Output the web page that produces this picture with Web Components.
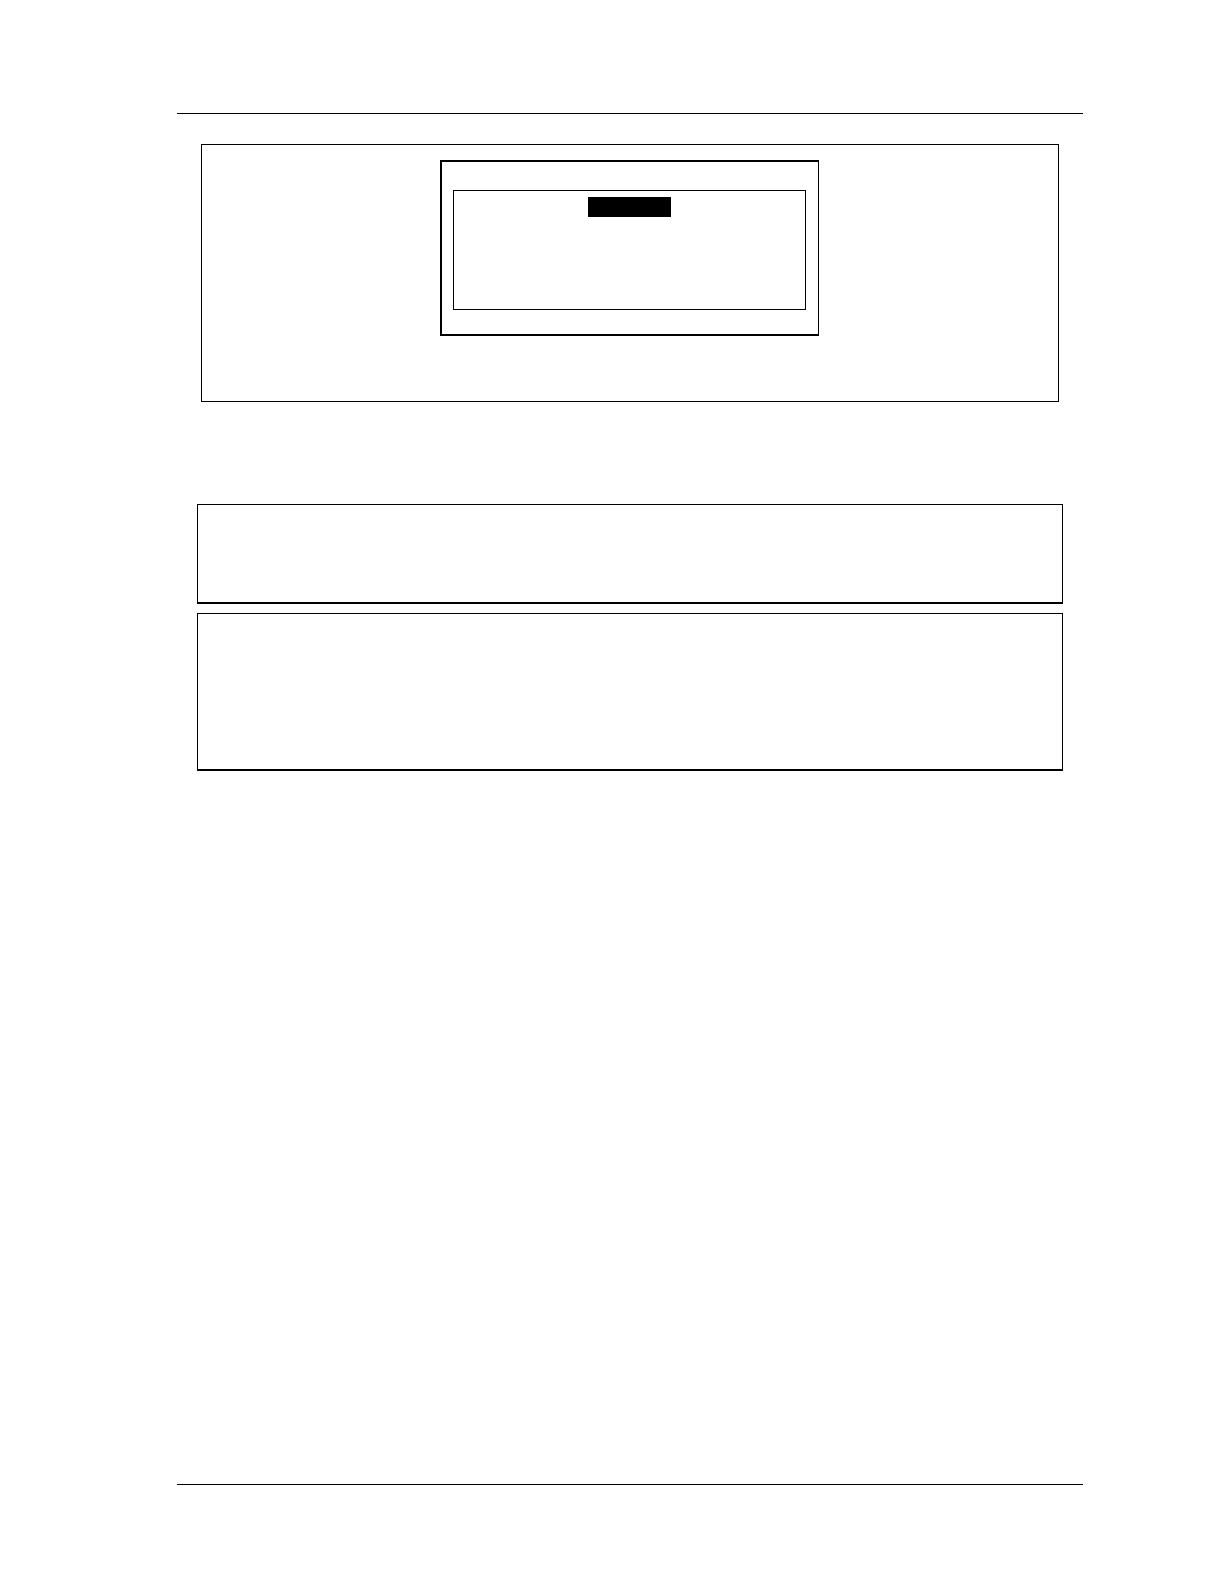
<!DOCTYPE html>
<html lang="en">
<head>
  <meta charset="UTF-8">
  <meta name="viewport" content="width=device-width, initial-scale=1.0">
  <style>
    body {
      margin: 0;
      background-color: #ffffff;
      font-family: "Liberation Sans", sans-serif;
    }
  </style>
</head>
<body>
  <doc-page>
    <doc-figure>
      <screen-window>
        <screen-panel></screen-panel>
      </screen-window>
    </doc-figure>
    <doc-notes>
      <note-box></note-box>
      <note-box size="large"></note-box>
    </doc-notes>
  </doc-page>

  <script>
    // Sheet with a rule at the top and at the bottom
    class DocPage extends HTMLElement {
      constructor() {
        super();
        const shadow = this.attachShadow({ mode: 'open' });

        shadow.innerHTML = `
          <style>
            :host {
              --line-color: #000000;
              display: flex;
              flex-direction: column;
              box-sizing: border-box;
              min-height: 100vh;
              padding: 113px 141px 99px 177px;
            }

            header {
              border-top: 1px solid var(--line-color);
            }

            main {
              flex: 1;
              padding-top: 30px;
            }

            footer {
              border-top: 1px solid var(--line-color);
            }
          </style>
          <header></header>
          <main><slot></slot></main>
          <footer></footer>
        `;
      }
    }

    // Outlined frame around a screen
    class DocFigure extends HTMLElement {
      constructor() {
        super();
        const shadow = this.attachShadow({ mode: 'open' });

        shadow.innerHTML = `
          <style>
            :host {
              display: block;
              margin: 0 24px;
              padding: 15px 239px 65px 238px;
              border: 1px solid var(--line-color);
            }
          </style>
          <slot></slot>
        `;
      }
    }

    class ScreenWindow extends HTMLElement {
      constructor() {
        super();
        const shadow = this.attachShadow({ mode: 'open' });

        shadow.innerHTML = `
          <style>
            :host {
              display: block;
              padding: 28px 12px 24px 11px;
              border: 2px solid var(--line-color);
              border-right-width: 1px;
            }
          </style>
          <slot></slot>
        `;
      }
    }

    // Panel with the highlighted title bar
    class ScreenPanel extends HTMLElement {
      constructor() {
        super();
        const shadow = this.attachShadow({ mode: 'open' });

        shadow.innerHTML = `
          <style>
            :host {
              display: flex;
              flex-direction: column;
              align-items: center;
              box-sizing: border-box;
              min-height: 120px;
              padding-top: 6px;
              border: 1px solid var(--line-color);
            }

            .highlight {
              width: 83px;
              height: 20px;
              background-color: var(--line-color);
            }
          </style>
          <div class="highlight"></div>
          <slot></slot>
        `;
      }
    }

    class DocNotes extends HTMLElement {
      constructor() {
        super();
        const shadow = this.attachShadow({ mode: 'open' });

        shadow.innerHTML = `
          <style>
            :host {
              display: flex;
              flex-direction: column;
              gap: 9px;
              margin: 102px 20px 0;
            }
          </style>
          <slot></slot>
        `;
      }
    }

    class NoteBox extends HTMLElement {
      constructor() {
        super();
        const shadow = this.attachShadow({ mode: 'open' });

        shadow.innerHTML = `
          <style>
            :host {
              display: block;
              box-sizing: border-box;
              min-height: 100px;
              border: 1px solid var(--line-color);
              border-bottom-width: 2px;
            }

            :host([size="large"]) {
              min-height: 158px;
            }
          </style>
          <slot></slot>
        `;
      }
    }

    customElements.define('doc-page', DocPage);
    customElements.define('doc-figure', DocFigure);
    customElements.define('screen-window', ScreenWindow);
    customElements.define('screen-panel', ScreenPanel);
    customElements.define('doc-notes', DocNotes);
    customElements.define('note-box', NoteBox);
  </script>
</body>
</html>
